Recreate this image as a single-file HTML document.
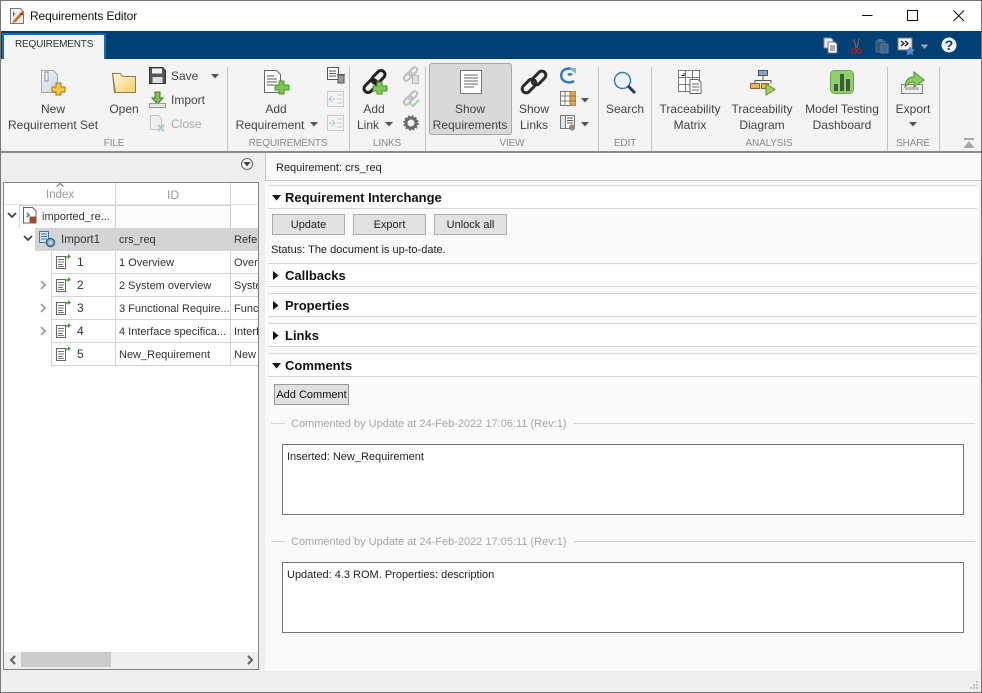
<!DOCTYPE html>
<html><head><meta charset="utf-8"><style>
html,body{margin:0;padding:0;background:#efefef}
#w{position:relative;width:982px;height:693px;overflow:hidden;background:#efefef;font-family:"Liberation Sans",sans-serif;font-size:12px;color:#222}
#w div{position:absolute;box-sizing:border-box}
.t{white-space:nowrap;line-height:16px;height:16px}
.s{font-size:11px;margin-top:1px}
.c{transform:translateX(-50%);text-align:center;color:#444}
.g{transform:translateX(-50%);white-space:nowrap;color:#8a8a8a;line-height:14px;font-size:10px;letter-spacing:-.15px}
.v{width:1px;background:#c4c4c4;top:67px;height:84px}
svg{position:absolute;overflow:visible}
.b{font-weight:bold;font-size:13px;color:#111;white-space:nowrap;line-height:16px}
.hl{left:268px;width:709px;height:1px;background:#d6d6d6}
.sec{left:269px;width:708px;height:21px;background:#fff}
.btn{background:#e1e1e1;border:1px solid #adadad;text-align:center;line-height:21px;color:#222;font-size:11px;white-space:nowrap}
</style></head><body><div id="w">

<!-- title bar -->
<div style="left:0;top:0;width:982px;height:31px;background:#fff"></div>
<svg style="left:9px;top:7px" width="18" height="18" viewBox="0 0 18 18"><path d="M1.500 1.500h10l3 3v12h-13z" fill="#f3efe8" stroke="#777"/><path d="M4 4l2 3-2 3z" fill="#2a6fc0"/><path d="M4 14l9-10 2 2-8 9-3 1z" fill="#c9772a"/><path d="M11 7l3 0" stroke="#a33" stroke-width="2"/></svg>
<div class="t" style="left:30px;top:8px;color:#111;font-size:12px;letter-spacing:-.12px">Requirements Editor</div>
<svg style="left:860px;top:8px" width="110" height="16" viewBox="0 0 110 16" fill="none" stroke="#111"><path d="M2 7.500h10.500"/><rect x="47.500" y="2.500" width="10" height="10"/><path d="M93.500 2.500l10.500 10.500M104 2.500L93.500 13"/></svg>

<!-- blue band -->
<div style="left:0;top:31px;width:982px;height:28px;background:#004074"></div>
<div style="left:2px;top:33px;width:104px;height:26px;background:#0e6cb9"></div>
<div style="left:4px;top:35px;width:100px;height:24px;background:#f4f4f4"></div>
<div class="t" style="left:15px;top:37px;font-size:10px;letter-spacing:-.2px;color:#333">REQUIREMENTS</div>

<svg style="left:822px;top:36px" width="140" height="20" viewBox="0 0 140 20">
<path d="M2 2h7l2 2v8H2z" fill="#eee" stroke="#888"/><path d="M6 6h7l2 2v9H6z" fill="#fff" stroke="#777"/><path d="M8 10h5M8 12h5M8 14h5" stroke="#555"/>
<path d="M32 3l2 9M37 3l-2 9" stroke="#7a6060" stroke-width="1.200"/><circle cx="32" cy="15" r="2.200" fill="none" stroke="#c01818" stroke-width="1.300"/><circle cx="37" cy="15" r="2.200" fill="none" stroke="#c01818" stroke-width="1.300"/>
<path d="M54 5h9v11h-9z" fill="#31587c" stroke="#4a6d8d"/><path d="M56 3h5v3h-5z" fill="#4d7090"/><path d="M59 8h7v9h-7z" fill="#3f6688" stroke="#5b7c9b"/>
<path d="M76 2h14v12H76z" fill="#f4f4f4" stroke="#777"/><path d="M79 5l3 2.500-3 2.500M83 5l3 2.500-3 2.500" fill="none" stroke="#222" stroke-width="1.300"/><path d="M88 10l1.500 3 3.500.5-2.500 2.500.6 3.500-3.100-1.700-3.100 1.700.6-3.500-2.500-2.500 3.500-.5z" fill="#5b86c4"/>
<path d="M98.500 8.500h8l-4 4.500z" fill="#8fa5b8"/>
<circle cx="127" cy="9" r="7.500" fill="#f4f6f8"/><text x="127" y="14" text-anchor="middle" font-size="14" font-weight="bold" fill="#004074" font-family="Liberation Sans">?</text>
</svg>

<!-- ribbon -->
<div style="left:0;top:59px;width:982px;height:92px;background:#f4f4f4"></div>
<div style="left:0;top:151px;width:982px;height:2px;background:#8a8a8a"></div>
<div class="v" style="left:227px"></div><div class="v" style="left:349px"></div><div class="v" style="left:425px"></div><div class="v" style="left:598px"></div><div class="v" style="left:651px"></div><div class="v" style="left:887px"></div><div class="v" style="left:939px"></div>
<div style="left:429px;top:63px;width:83px;height:72px;background:#d9d9d9;border:1px solid #a6a6a6;border-radius:3px"></div>

<!-- ribbon icons: FILE -->
<svg style="left:40px;top:69px" width="26" height="26" viewBox="0 0 26 26"><defs><linearGradient id="fd" x1="0" y1="0" x2="1" y2="1"><stop offset="0" stop-color="#f4f4f4"/><stop offset="1" stop-color="#c9d6e4"/></linearGradient><linearGradient id="fo" x1="0" y1="0" x2="1" y2="1"><stop offset="0" stop-color="#fff8dc"/><stop offset="1" stop-color="#f5cf6a"/></linearGradient></defs><path d="M1.500 1.500h12l4 4v18h-16z" fill="url(#fd)" stroke="#a8a8a8"/><path d="M5 3h3v9H5z" fill="#fff" stroke="#888"/><path d="M16 14h5v4h4v5h-4v3h-5v-3h-4v-5h4z" fill="#f4c542" stroke="#a87812"/></svg>
<svg style="left:111px;top:72px" width="26" height="22" viewBox="0 0 26 22"><path d="M1.500 1.500h8l2 3h13v16h-21z" fill="url(#fo)" stroke="#9a7a4a"/><path d="M1.500 1.500l3 19" fill="none" stroke="#9a7a4a"/></svg>
<svg style="left:149px;top:67px" width="17" height="17" viewBox="0 0 17 17"><path d="M.5.500h13l3 3v13H.5z" fill="#555" stroke="#333"/><path d="M3 1.500h10v5H3z" fill="#f2f2f2"/><path d="M3.500 10h10v6h-10z" fill="#ddd"/></svg>
<svg style="left:149px;top:91px" width="17" height="17" viewBox="0 0 17 17"><path d="M6 1h5v6h3l-5.500 6L3 7h3z" fill="#7fc14a" stroke="#3d7a25"/><path d="M.5 12.500h16v4H.5z" fill="#e6e6e6" stroke="#999"/></svg>
<svg style="left:149px;top:115px" width="17" height="17" viewBox="0 0 17 17"><path d="M1.500.500h8l3 3v11h-11z" fill="#f0f0f0" stroke="#c4c4c4"/><path d="M9 10l6 6M15 10l-6 6" stroke="#b7c8d6" stroke-width="2.400"/></svg>
<div class="t" style="left:171px;top:68px;color:#444">Save</div>
<div class="t" style="left:171px;top:92px;color:#444">Import</div>
<div class="t" style="left:171px;top:116px;color:#aaa">Close</div>
<svg style="left:211px;top:74px" width="8" height="5"><path d="M0 0h8l-4 4.500z" fill="#555"/></svg>

<div class="t c" style="left:53px;top:101px">New</div>
<div class="t c" style="left:53px;top:117px">Requirement Set</div>
<div class="t c" style="left:124px;top:101px">Open</div>
<div class="g" style="left:114px;top:137px">FILE</div>

<!-- REQUIREMENTS -->
<svg style="left:264px;top:70px" width="26" height="25" viewBox="0 0 26 25"><path d="M.5.500h12l4 4v18H.5z" fill="#fff" stroke="#666"/><path d="M3 6h7M3 9h10M3 12h10M3 15h7" stroke="#555"/><path d="M15 11h5v4h5v5h-5v4h-5v-4h-4v-5h4z" fill="#78c850" stroke="#4c8f30"/></svg>
<div class="t c" style="left:276px;top:101px">Add</div>
<div class="t c" style="left:270px;top:117px">Requirement</div>
<svg style="left:310px;top:122px" width="8" height="5"><path d="M0 0h8l-4 4.500z" fill="#555"/></svg>
<svg style="left:327px;top:67px" width="18" height="17" viewBox="0 0 18 17"><path d="M.5.500h11v12H.5z" fill="#fff" stroke="#555"/><path d="M2 4h7M2 6.500h7M2 9h7" stroke="#555"/><path d="M11 8h6v8h-6z" fill="#999" stroke="#555"/><path d="M10 7.500h8" stroke="#555"/></svg>
<svg style="left:327px;top:91px" width="17" height="17" viewBox="0 0 17 17"><path d="M.5.500h16v15H.5z" fill="#f4f4f4" stroke="#ccc"/><path d="M2 8h6M5 5L2 8l3 3" fill="none" stroke="#a9c7e6"/><path d="M10 4h5M10 8h5M10 12h5" stroke="#ccc"/></svg>
<svg style="left:327px;top:115px" width="17" height="17" viewBox="0 0 17 17"><path d="M.5.500h16v15H.5z" fill="#f4f4f4" stroke="#ccc"/><path d="M2 8h6M5 5l3 3-3 3" fill="none" stroke="#a9c7e6"/><path d="M10 4h5M10 8h5M10 12h5" stroke="#ccc"/></svg>
<div class="g" style="left:288px;top:137px">REQUIREMENTS</div>

<!-- LINKS -->
<svg style="left:362px;top:69px" width="26" height="26" viewBox="0 0 26 26"><rect x="1" y="13" width="15" height="8" rx="4" transform="rotate(-45 8.500 17)" fill="none" stroke="#222" stroke-width="3"/><rect x="9" y="4" width="15" height="8" rx="4" transform="rotate(-45 16.500 8)" fill="none" stroke="#222" stroke-width="3"/><path d="M15 13h5v4h5v5h-5v3h-5v-3h-4v-5h4z" fill="#7ccb52" stroke="#4c8f30"/></svg>
<div class="t c" style="left:374px;top:101px">Add</div>
<div class="t c" style="left:368px;top:117px">Link</div>
<svg style="left:385px;top:122px" width="8" height="5"><path d="M0 0h8l-4 4.500z" fill="#555"/></svg>
<svg style="left:403px;top:67px" width="17" height="17" viewBox="0 0 17 17"><rect x="0" y="7" width="10" height="5" rx="2.500" transform="rotate(-45 5 9.500)" fill="none" stroke="#bdbdbd" stroke-width="2"/><rect x="5" y="2" width="10" height="5" rx="2.500" transform="rotate(-45 10 4.500)" fill="none" stroke="#bdbdbd" stroke-width="2"/><path d="M9.500 8.500h6v8h-6z" fill="#ddd" stroke="#bbb"/></svg>
<svg style="left:403px;top:91px" width="17" height="17" viewBox="0 0 17 17"><rect x="0" y="7" width="10" height="5" rx="2.500" transform="rotate(-45 5 9.500)" fill="none" stroke="#bdbdbd" stroke-width="2"/><rect x="5" y="2" width="10" height="5" rx="2.500" transform="rotate(-45 10 4.500)" fill="none" stroke="#bdbdbd" stroke-width="2"/><path d="M7 12l3 3 6-6" fill="none" stroke="#a6d39a" stroke-width="2"/></svg>
<svg style="left:403px;top:115px" width="16" height="16" viewBox="0 0 16 16"><circle cx="8" cy="8" r="5" fill="none" stroke="#6a6a6a" stroke-width="3"/><circle cx="8" cy="8" r="7" fill="none" stroke="#6a6a6a" stroke-width="1.500" stroke-dasharray="2 1.700"/></svg>
<div class="g" style="left:387px;top:137px">LINKS</div>

<!-- VIEW -->
<svg style="left:460px;top:70px" width="22" height="24" viewBox="0 0 22 24"><path d="M.5.500h21v23H.5z" fill="#fff" stroke="#777"/><path d="M4 5h14M4 8h14M4 11h14M4 14h14M4 17h10" stroke="#666"/></svg>
<div class="t c" style="left:470px;top:101px">Show</div>
<div class="t c" style="left:470px;top:117px">Requirements</div>
<svg style="left:521px;top:69px" width="26" height="26" viewBox="0 0 26 26"><rect x="0" y="13" width="16" height="8" rx="4" transform="rotate(-45 8 17)" fill="none" stroke="#2a2a2a" stroke-width="3"/><rect x="10" y="5" width="16" height="8" rx="4" transform="rotate(-45 18 9)" fill="none" stroke="#2a2a2a" stroke-width="3"/></svg>
<div class="t c" style="left:534px;top:101px">Show</div>
<div class="t c" style="left:534px;top:117px">Links</div>
<svg style="left:560px;top:67px" width="17" height="17" viewBox="0 0 17 17"><path d="M14 14c-3 2-8 2-11-1s-2-8 1-10 7-2 9 0M8 8c1-1 3-1 4 0" fill="none" stroke="#2f78c4" stroke-width="2.400"/><path d="M9 1h7v6z" fill="#7fb2e0"/></svg>
<svg style="left:560px;top:91px" width="16" height="15" viewBox="0 0 16 15"><path d="M.5.500h15v14H.5z" fill="#fff" stroke="#777"/><path d="M10 .5h5.500v14H10z" fill="#f0a23a"/><path d="M.5 5h15M.5 10h15M5 .5v14M10 .5v14" stroke="#8a7a64"/></svg>
<svg style="left:560px;top:115px" width="17" height="16" viewBox="0 0 17 16"><path d="M.5.500h5v13h-5z" fill="#dde6ee" stroke="#777"/><path d="M5.500.500h9v13h-9z" fill="#fff" stroke="#777"/><path d="M7 3h6M7 5.500h6M7 8h6" stroke="#555"/><circle cx="12" cy="12.500" r="3" fill="#888"/></svg>
<svg style="left:581px;top:98px" width="8" height="5"><path d="M0 0h8l-4 4.500z" fill="#555"/></svg>
<svg style="left:581px;top:122px" width="8" height="5"><path d="M0 0h8l-4 4.500z" fill="#555"/></svg>
<div class="g" style="left:512px;top:137px">VIEW</div>

<!-- EDIT -->
<svg style="left:613px;top:71px" width="24" height="24" viewBox="0 0 24 24"><circle cx="9.500" cy="9.500" r="8" fill="#eef4f9" stroke="#2f7ab8" stroke-width="1.500"/><path d="M15 15l7 7" stroke="#22405e" stroke-width="3"/></svg>
<div class="t c" style="left:625px;top:101px">Search</div>
<div class="g" style="left:625px;top:137px">EDIT</div>

<!-- ANALYSIS -->
<svg style="left:678px;top:70px" width="24" height="24" viewBox="0 0 24 24"><path d="M.5.500h21v21H.5z" fill="#fff" stroke="#777"/><path d="M.5 7.500h21M.5 14.500h21M7.500.5v21M14.500.5v21" stroke="#777"/><path d="M12 9.500h8l3 3v11H12z" fill="#fff" stroke="#666"/><path d="M14 14h7M14 17h7M14 20h7" stroke="#666"/><path d="M6 3v2.500H3.500" fill="none" stroke="#222"/></svg>
<div class="t c" style="left:690px;top:101px">Traceability</div>
<div class="t c" style="left:690px;top:117px">Matrix</div>
<svg style="left:750px;top:70px" width="26" height="24" viewBox="0 0 26 24"><path d="M8.500.500h9v5h-9z" fill="#7ea6cc" stroke="#555"/><path d="M13 5.500v5M5 10.500h16v3" fill="none" stroke="#555"/><path d="M5 10.500v3" stroke="#555"/><path d="M.5 13.500h9v5h-9zM11.500 13.500h7v5h-7z" fill="#f0b24a" stroke="#8a6a2a"/><path d="M16 14l9 5.500-9 5.500z" fill="#9fd05f" stroke="#5a8f30"/></svg>
<div class="t c" style="left:762px;top:101px">Traceability</div>
<div class="t c" style="left:762px;top:117px">Diagram</div>
<svg style="left:830px;top:70px" width="24" height="24" viewBox="0 0 24 24"><rect x=".5" y=".5" width="23" height="23" rx="4" fill="#8fcf6a" stroke="#6ea552"/><path d="M4 14h4v7H4zM10 4h4v17h-4zM16 9h4v12h-4z" fill="#3f5a3f"/></svg>
<div class="t c" style="left:842px;top:101px">Model Testing</div>
<div class="t c" style="left:842px;top:117px">Dashboard</div>
<div class="g" style="left:769px;top:137px">ANALYSIS</div>

<!-- SHARE -->
<svg style="left:901px;top:70px" width="24" height="24" viewBox="0 0 24 24"><path d="M.5 14.500h21v9H.5z" fill="#eee" stroke="#888"/><path d="M4 17h14v3H4z" fill="#bbb"/><path d="M4 17c0-7 4-10 9-10V2l10 8-10 7v-5c-4 0-6 2-9 5z" fill="#8ecb5e" stroke="#4e8f30"/></svg>
<div class="t c" style="left:913px;top:101px">Export</div>
<svg style="left:909px;top:122px" width="8" height="5"><path d="M0 0h8l-4 4.500z" fill="#555"/></svg>
<div class="g" style="left:913px;top:137px">SHARE</div>
<svg style="left:963px;top:138px" width="12" height="11"><path d="M1 0h10v2H1z" fill="#a8a8a8"/><path d="M6 3l5.500 7H.5z" fill="#a8a8a8"/></svg>

<!-- left panel -->
<svg style="left:240px;top:157px" width="14" height="14" viewBox="0 0 14 14"><circle cx="7" cy="7" r="5.500" fill="#f4f4f4" stroke="#666"/><path d="M3.500 5h7L7 9.500z" fill="#444"/></svg>
<div style="left:3px;top:182px;width:256px;height:488px;background:#fff;border:1px solid #7d868c"></div>
<div style="left:115px;top:183px;width:1px;height:182px;background:#d4d4d4"></div>
<div style="left:230px;top:183px;width:1px;height:182px;background:#d4d4d4"></div>
<div style="left:4px;top:204px;width:254px;height:1px;background:#e4e4e4"></div>
<div class="t" style="left:46px;top:187px;color:#999;font-size:11.500px">Index</div>
<div class="t" style="left:167px;top:187px;color:#999">ID</div>
<svg style="left:56px;top:183px" width="8" height="4"><path d="M.5 3.500L4 .5l3.500 3" fill="none" stroke="#666"/></svg>

<div style="left:19px;top:205px;width:212px;height:23px;background:#fbfbfb;border:1px solid #d4d4d4;border-bottom:none"></div>
<div style="left:115px;top:205px;width:1px;height:23px;background:#d4d4d4"></div>
<svg style="left:7px;top:212px" width="10" height="7"><path d="M1 1l4 4 4-4" fill="none" stroke="#444" stroke-width="1.800"/></svg>
<svg style="left:23px;top:207px" width="14" height="17" viewBox="0 0 14 17"><path d="M.5.500h9l3.500 3.500v12H.5z" fill="#fff" stroke="#666"/><path d="M4 6l2 2-2 2" fill="none" stroke="#2a6fc0" stroke-width="1.500"/><path d="M7 10h5v5H7z" fill="#c33" stroke="#8a5a10"/></svg>
<div class="t s" style="left:42px;top:208px;color:#333">imported_re...</div>

<div style="left:35px;top:228px;width:223px;height:23px;background:#d4d4d4"></div>
<svg style="left:23px;top:235px" width="10" height="7"><path d="M1 1l4 4 4-4" fill="none" stroke="#444" stroke-width="1.800"/></svg>
<svg style="left:39px;top:231px" width="17" height="17" viewBox="0 0 17 17"><path d="M.5.500h9v11h-9z" fill="#d8e6f4" stroke="#3a78b8"/><path d="M2 3h6M2 5.500h6M2 8h6" stroke="#3a78b8"/><circle cx="11.500" cy="11.500" r="4" fill="#8fb8dc" stroke="#3a5f80" stroke-width="1.400"/><circle cx="11.500" cy="11.500" r="1.300" fill="#fff"/></svg>
<div class="t" style="left:61px;top:232px;color:#333;font-size:11.500px">Import1</div>
<div class="t s" style="left:119px;top:231px;color:#333">crs_req</div>
<div class="t s" style="left:234px;top:231px;color:#333;width:24px;overflow:hidden">Reference</div>

<!-- rows -->
<div style="left:51px;top:251px;width:207px;height:115px;background:#fff;border-left:1px solid #d4d4d4"></div>
<div style="left:51px;top:273px;width:207px;height:1px;background:#d4d4d4"></div>
<div style="left:51px;top:296px;width:207px;height:1px;background:#d4d4d4"></div>
<div style="left:51px;top:319px;width:207px;height:1px;background:#d4d4d4"></div>
<div style="left:51px;top:342px;width:207px;height:1px;background:#d4d4d4"></div>
<div style="left:51px;top:365px;width:207px;height:1px;background:#d4d4d4"></div>
<div style="left:115px;top:251px;width:1px;height:115px;background:#d4d4d4"></div>
<div style="left:230px;top:251px;width:1px;height:115px;background:#d4d4d4"></div>

<svg style="left:56px;top:253px" width="15" height="16" viewBox="0 0 15 16"><path d="M.5 3.500h9v12h-9z" fill="#fff" stroke="#666"/><path d="M2 6.500h6M2 9h6M2 11.500h5M2 13.500h6" stroke="#777"/><path d="M9 6c0-2 2-3 3-3V1l3 2.500L12 6V4.500c-1 0-2 .5-3 1.500z" fill="#4c9a3a"/></svg>
<svg style="left:56px;top:276px" width="15" height="16" viewBox="0 0 15 16"><path d="M.5 3.500h9v12h-9z" fill="#fff" stroke="#666"/><path d="M2 6.500h6M2 9h6M2 11.500h5M2 13.500h6" stroke="#777"/><path d="M9 6c0-2 2-3 3-3V1l3 2.500L12 6V4.500c-1 0-2 .5-3 1.500z" fill="#4c9a3a"/></svg>
<svg style="left:56px;top:299px" width="15" height="16" viewBox="0 0 15 16"><path d="M.5 3.500h9v12h-9z" fill="#fff" stroke="#666"/><path d="M2 6.500h6M2 9h6M2 11.500h5M2 13.500h6" stroke="#777"/><path d="M9 6c0-2 2-3 3-3V1l3 2.500L12 6V4.500c-1 0-2 .5-3 1.500z" fill="#4c9a3a"/></svg>
<svg style="left:56px;top:322px" width="15" height="16" viewBox="0 0 15 16"><path d="M.5 3.500h9v12h-9z" fill="#fff" stroke="#666"/><path d="M2 6.500h6M2 9h6M2 11.500h5M2 13.500h6" stroke="#777"/><path d="M9 6c0-2 2-3 3-3V1l3 2.500L12 6V4.500c-1 0-2 .5-3 1.500z" fill="#4c9a3a"/></svg>
<svg style="left:56px;top:345px" width="15" height="16" viewBox="0 0 15 16"><path d="M.5 3.500h9v12h-9z" fill="#fff" stroke="#666"/><path d="M2 6.500h6M2 9h6M2 11.500h5M2 13.500h6" stroke="#777"/><path d="M9 6c0-2 2-3 3-3V1l3 2.500L12 6V4.500c-1 0-2 .5-3 1.500z" fill="#4c9a3a"/></svg>

<svg style="left:40px;top:280px" width="7" height="10"><path d="M1 1l4 4-4 4" fill="none" stroke="#999" stroke-width="1.600"/></svg>
<svg style="left:40px;top:303px" width="7" height="10"><path d="M1 1l4 4-4 4" fill="none" stroke="#999" stroke-width="1.600"/></svg>
<svg style="left:40px;top:326px" width="7" height="10"><path d="M1 1l4 4-4 4" fill="none" stroke="#999" stroke-width="1.600"/></svg>

<div class="t" style="left:77px;top:254px;color:#333">1</div>
<div class="t" style="left:77px;top:277px;color:#333">2</div>
<div class="t" style="left:77px;top:300px;color:#333">3</div>
<div class="t" style="left:77px;top:323px;color:#333">4</div>
<div class="t" style="left:77px;top:346px;color:#333">5</div>
<div class="t s" style="left:119px;top:254px;color:#333">1 Overview</div>
<div class="t s" style="left:119px;top:277px;color:#333">2 System overview</div>
<div class="t s" style="left:119px;top:300px;color:#333">3 Functional Require...</div>
<div class="t s" style="left:119px;top:323px;color:#333">4 Interface specifica...</div>
<div class="t s" style="left:119px;top:346px;color:#333">New_Requirement</div>
<div class="t s" style="left:234px;top:254px;color:#333;width:24px;overflow:hidden">Overview</div>
<div class="t s" style="left:234px;top:277px;color:#333;width:24px;overflow:hidden">System</div>
<div class="t s" style="left:234px;top:300px;color:#333;width:24px;overflow:hidden">Functional</div>
<div class="t s" style="left:234px;top:323px;color:#333;width:24px;overflow:hidden">Interface</div>
<div class="t s" style="left:234px;top:346px;color:#333;width:24px;overflow:hidden">New</div>

<!-- scrollbar -->
<div style="left:4px;top:652px;width:254px;height:17px;background:#efefef"></div>
<div style="left:21px;top:652px;width:90px;height:15px;background:#cbcbcb"></div>
<svg style="left:9px;top:655px" width="7" height="10"><path d="M6 1L2 5l4 4" fill="none" stroke="#606060" stroke-width="2"/></svg>
<svg style="left:247px;top:655px" width="7" height="10"><path d="M1 1l4 4-4 4" fill="none" stroke="#606060" stroke-width="2"/></svg>

<!-- right panel -->
<div style="left:265px;top:153px;width:714px;height:518px;background:#fafafa"></div>
<div style="left:265px;top:153px;width:716px;height:28px;background:#fafafa;border:1px solid #c8c8c8;border-top:none;border-right:none"></div>
<div class="t s" style="left:276px;top:159px;color:#222">Requirement: crs_req</div>

<div class="hl" style="top:185px"></div><div class="sec" style="top:187px"></div><div class="hl" style="top:208px"></div>
<svg style="left:272px;top:195px" width="10" height="6"><path d="M0 0h9L4.500 5.500z" fill="#111"/></svg>
<div class="b" style="left:285px;top:190px">Requirement Interchange</div>

<div class="btn" style="left:272px;top:214px;width:73px;height:21px">Update</div>
<div class="btn" style="left:353px;top:214px;width:73px;height:21px">Export</div>
<div class="btn" style="left:434px;top:214px;width:73px;height:21px">Unlock all</div>
<div class="t s" style="left:271px;top:241px;color:#222">Status: The document is up-to-date.</div>

<div class="hl" style="top:263px"></div><div class="sec" style="top:265px"></div><div class="hl" style="top:286px"></div>
<svg style="left:273px;top:271px" width="6" height="10"><path d="M0 0l5.500 4.500L0 9z" fill="#111"/></svg>
<div class="b" style="left:285px;top:268px">Callbacks</div>

<div class="hl" style="top:293px"></div><div class="sec" style="top:295px"></div><div class="hl" style="top:316px"></div>
<svg style="left:273px;top:301px" width="6" height="10"><path d="M0 0l5.500 4.500L0 9z" fill="#111"/></svg>
<div class="b" style="left:285px;top:298px">Properties</div>

<div class="hl" style="top:323px"></div><div class="sec" style="top:325px"></div><div class="hl" style="top:346px"></div>
<svg style="left:273px;top:331px" width="6" height="10"><path d="M0 0l5.500 4.500L0 9z" fill="#111"/></svg>
<div class="b" style="left:285px;top:328px">Links</div>

<div class="hl" style="top:353px"></div><div class="sec" style="top:355px"></div><div class="hl" style="top:376px"></div>
<svg style="left:272px;top:363px" width="10" height="6"><path d="M0 0h9L4.500 5.500z" fill="#111"/></svg>
<div class="b" style="left:285px;top:358px">Comments</div>

<div class="btn" style="left:274px;top:384px;width:75px;height:21px;border-color:#999;color:#111">Add Comment</div>

<div style="left:271px;top:423px;width:14px;height:1px;background:#d4d4d4"></div>
<div style="left:574px;top:423px;width:401px;height:1px;background:#d4d4d4"></div>
<div class="t s" style="left:291px;top:415px;color:#a6a6a6">Commented by Update at 24-Feb-2022 17:06:11 (Rev:1)</div>
<div style="left:282px;top:444px;width:682px;height:71px;background:#fff;border:1px solid #777"></div>
<div class="t s" style="left:287px;top:448px;color:#222">Inserted: New_Requirement</div>

<div style="left:271px;top:541px;width:14px;height:1px;background:#d4d4d4"></div>
<div style="left:574px;top:541px;width:401px;height:1px;background:#d4d4d4"></div>
<div class="t s" style="left:291px;top:533px;color:#a6a6a6">Commented by Update at 24-Feb-2022 17:05:11 (Rev:1)</div>
<div style="left:282px;top:562px;width:682px;height:71px;background:#fff;border:1px solid #777"></div>
<div class="t s" style="left:287px;top:566px;color:#222">Updated: 4.3 ROM. Properties: description</div>

<!-- grip -->
<svg style="left:970px;top:681px" width="9" height="9" fill="#c0c0c0"><rect x="6" y="0" width="2" height="2"/><rect x="3" y="3" width="2" height="2"/><rect x="6" y="3" width="2" height="2"/><rect x="0" y="6" width="2" height="2"/><rect x="3" y="6" width="2" height="2"/><rect x="6" y="6" width="2" height="2"/></svg>

<!-- window border -->
<div style="left:0;top:0;width:982px;height:693px;border:1px solid #777;pointer-events:none"></div>
</div></body></html>
